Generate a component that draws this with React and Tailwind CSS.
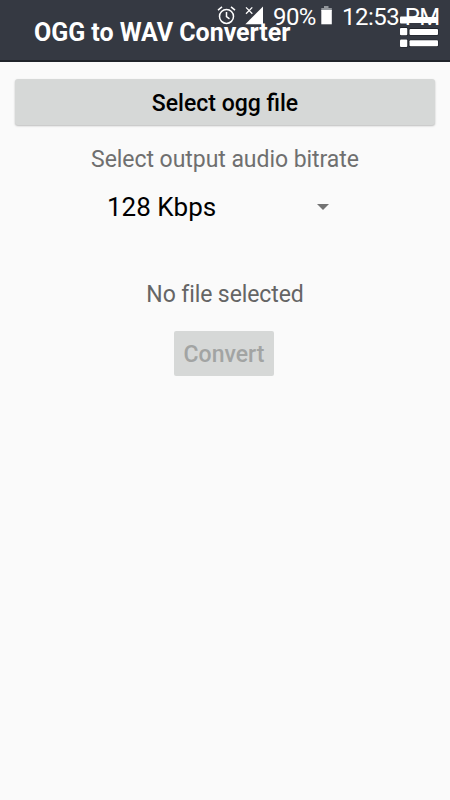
function StatusBar() {
  return (
    <div className="absolute inset-x-0 top-0 flex h-8 text-white">
      <svg className="ml-[217px] mt-[6px] h-[19px] w-[19px] shrink-0" viewBox="0 0 19 19" fill="none" stroke="currentColor" strokeWidth="1.5">
        <circle cx="9.5" cy="10.4" r="7" />
        <path d="M9.5 6v4.7l3 2.1M1 4.2l4-3.3M18 4.2l-4-3.3" />
      </svg>
      <svg className="ml-[9px] mt-[6px] h-[19px] w-[19px] shrink-0" viewBox="0 0 19 19">
        <path d="M18 .5v17.7H.3z" fill="currentColor" />
        <path d="M0 .5h8.5v8.5H0z" fill="#353942" />
        <path d="M1 1.4l6.3 6.3M7.3 1.4L1 7.7" stroke="currentColor" strokeWidth="1.3" />
      </svg>
      <span className="ml-[9px] mt-[1px] w-[44px] whitespace-nowrap text-[24px] leading-8 tracking-[-0.6px]">90%</span>
      <svg className="ml-[4px] mt-[6px] h-[19px] w-[12px] shrink-0" viewBox="0 0 12 19">
        <path d="M3 0h4.5v2H3z" fill="#92969b" />
        <path d="M.3 2h10.5v3H.3z" fill="#92969b" />
        <path d="M.3 4h10.5v14.3H.3z" fill="currentColor" />
      </svg>
      <span className="ml-[9px] mt-[1px] whitespace-nowrap text-[24px] leading-8 tracking-[-0.5px]">12:53 PM</span>
    </div>
  );
}

function MenuIcon() {
  return (
    <svg className="mt-4 h-8 w-10" viewBox="0 0 40 32" fill="white">
      <g fill="#1b1e24">
        <rect x="-.5" y="11.3" width="8.6" height="8.6" rx="1.5" />
        <rect x="8.8" y="12.3" width="29.7" height="7.3" rx="1.5" />
        <rect x="-.5" y="22.9" width="8.6" height="8.6" rx="1.5" />
        <rect x="8.8" y="23.7" width="29.7" height="7.3" rx="1.5" />
      </g>
      <rect x="0" y=".5" width="7.5" height="7" rx="1" />
      <rect x="7" y="1" width="31" height="6" rx="1" />
      <rect x="0" y="12" width="7.3" height="7.3" rx="1" />
      <rect x="9.5" y="13" width="28.5" height="6" rx="1" />
      <rect x="0" y="23.6" width="7.3" height="7.3" rx="1" />
      <rect x="9.5" y="24.3" width="28.5" height="6" rx="1" />
    </svg>
  );
}

export default function App() {
  return (
    <div className="relative flex h-[800px] w-[450px] flex-col overflow-hidden bg-[#fafafa] font-['Roboto',sans-serif]">
      <header className="flex h-[62px] shrink-0 justify-between border-b-2 border-[#20242a] bg-[#353942] pl-[34px] pr-[10px]">
        <h1 className="mt-4 whitespace-nowrap text-[25px] font-bold leading-[33px] tracking-[-0.04px] text-white">OGG to WAV Converter</h1>
        <button aria-label="Menu" className="shrink-0 self-start"><MenuIcon /></button>
      </header>
      <StatusBar />
      <main className="flex flex-col items-center pt-[17px]">
        <button className="h-[46px] w-[420px] rounded-[3px] bg-[#d6d8d7] text-[23px] font-medium leading-[46px] text-black shadow-[0_1px_2px_rgba(0,0,0,0.25)]">
          <span className="relative top-[2px]">Select ogg file</span>
        </button>
        <p className="mt-[19px] whitespace-nowrap text-[23px] leading-8 tracking-[-0.05px] text-[#6f6f6f]">Select output audio bitrate</p>
        <button className="mt-[15px] flex h-8 w-[236px] items-center justify-between pr-[14px] text-[26px] leading-8 text-black">
          <span>128 Kbps</span>
          <svg className="h-[6px] w-3" viewBox="0 0 12 6"><path d="M0 0h12L6 6z" fill="#737373" /></svg>
        </button>
        <p className="mt-14 whitespace-nowrap text-[23px] leading-8 tracking-[-0.1px] text-[#656565]">No file selected</p>
        <button disabled className="mr-[2px] mt-5 h-[45px] w-[100px] rounded-[2px] bg-[#d6d8d7] text-[23px] font-medium leading-[48px] text-[#a2a4a3]">Convert</button>
      </main>
    </div>
  );
}
